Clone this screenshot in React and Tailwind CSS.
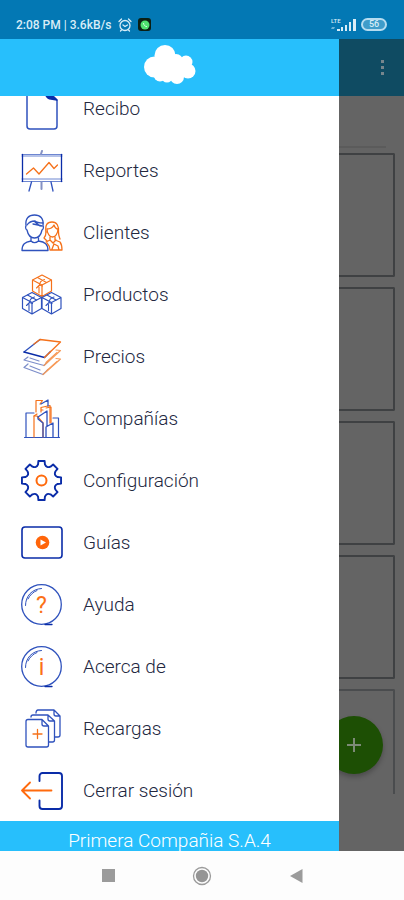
// Side menu of the invoicing app, opened over the dimmed home screen

const BLUE = '#2f52bd'
const NAVY = '#0a2ca8'
const ORANGE = '#f5711a'

function Icon({ children }) {
  return (
    <svg
      viewBox="0 0 42 42"
      className="w-[42px] h-[42px] shrink-0"
      fill="none"
      stroke={BLUE}
      strokeWidth="1.3"
      strokeLinecap="round"
      strokeLinejoin="round"
      aria-hidden="true"
    >
      {children}
    </svg>
  )
}

function ReceiptIcon() {
  return (
    <Icon>
      <path d="M25 1H9a3 3 0 0 0-3 3v34a3 3 0 0 0 3 3h24a3 3 0 0 0 3-3V12z" strokeWidth="1.5" />
      <path d="M24 5c1 4 3 6 6 6l6 1-6-5z" fill={NAVY} stroke={NAVY} />
    </Icon>
  )
}

function ReportIcon() {
  return (
    <Icon>
      <path d="M1 4.5h40M1 6h40M1 29h40M1 31.5h40" strokeWidth="1" opacity="0.7" />
      <path d="M1.5 4.5v27M40.5 4.5v27" stroke={NAVY} />
      <path d="M10.5 32 8 41M30 32l2 9" />
      <path d="M20.5 32v7M20 4l1-3" stroke="#8592c4" strokeWidth="2" />
      <path d="m5.500 24 7-6 5.500 6L28 12.500l5 6 3.500-3.500" stroke={ORANGE} />
    </Icon>
  )
}

function ClientsIcon() {
  return (
    <Icon>
      <path d="M5 14C4 6 8 3 13.500 3S23 6 22 14c1 1 0 4-1 4-1 5-4 8-7.500 8S7 23 6 18c-1 0-2-3-1-4z" />
      <path d="M6 13c2-3 5-4 8-4 2 2 6 2 8 2M12 12l5 1 4 1M14 10l5 4" />
      <path d="M10 26v3c-6 1-9 3-9 9.500h26C27 32 24 30 17.500 29v-3M10 29c2 2 5 2 7.500 0" />
      <g stroke={ORANGE}>
        <path d="M25 20c-1-7 1-10 6-10s7 4 6.500 10c0 4 1 5 1.500 7" />
        <path d="M26 17c4 0 6-2 7-4 1 3 2 4 4 4 0 5-3 8-5.500 8S26 22 26 17z" />
        <path d="M25 20c0 4-1 5-2 6l3 3M29 25v3l-4 2M34 25v3l5 2c1.500 2 2 4 2 8h-12c0-3-1-5-3-7M29 28l3 3 3-3M31 37l2-5 4 2 1 4" />
      </g>
    </Icon>
  )
}

function Cube({ x, y, color }) {
  return (
    <g transform={`translate(${x} ${y})`} stroke={color} strokeWidth="1.2">
      <path d="M9.500 0 19 5v11l-9.500 5.500L0 16V5zM0 5l9.500 5L19 5M9.500 10v11.500" />
      <path d="m5 2.500 9 5M7 10.500c0-3 1-5 5-6M4 13l3-3 3 1M6.500 12v6" strokeWidth="1.100" />
    </g>
  )
}

function ProductsIcon() {
  return (
    <Icon>
      <Cube x={11.5} y={1} color={ORANGE} />
      <Cube x={1.5} y={18.5} color={BLUE} />
      <Cube x={21} y={18.5} color={BLUE} />
    </Icon>
  )
}

function PricesIcon() {
  return (
    <Icon>
      <path d="m3 16 16-12.500" />
      <path d="m3 16 20.500 5.500 6-6" stroke={NAVY} />
      <path d="m13 8 6-4.500L39.500 6 23.500 21.500" stroke={ORANGE} />
      <g stroke="#7c8dc9" strokeWidth="1.2">
        <path d="m7 21-4 3 20 5.500 5-5M7 28l-4 3.500L22 38.500l5-5" />
        <path d="m9 22 9 3M9 30l10 4" />
      </g>
      <g stroke="#f79a58" strokeWidth="1.2">
        <path d="m35 14 4.500.500L23 29.500M35 22.500l4.500.500L22 38.500" />
        <path d="m36 16.500-11 10M36 25.500l-10 9" />
      </g>
    </Icon>
  )
}

function CompaniesIcon() {
  return (
    <Icon>
      <path d="M3.500 39.500h35M5 39V15h8M37.500 39V20H32" strokeWidth="1.200" />
      <g stroke={ORANGE} strokeWidth="1.200">
        <path d="M15 14V2.500h6.500L19 6M13 39V18l3-2M20 14V9.500l9-2V25M20 12h2" />
        <path d="M13 18h3l6 7v14M25 10l5-1v16" />
      </g>
      <path d="m20 6 7-4v6M17 19l9-6v15M17 19v2l5 4v14M25 39V29l7-4v14" />
    </Icon>
  )
}

const GEAR_ANGLES = [0, 45, 90, 135, 180, 225, 270, 315]

function gearPath(cx, cy) {
  const at = (deg, r) => {
    const a = ((deg - 90) * Math.PI) / 180
    return `${(cx + r * Math.cos(a)).toFixed(2)} ${(cy + r * Math.sin(a)).toFixed(2)}`
  }
  // tooth flank, tip, flank, then a shallow valley to the next tooth
  const teeth = GEAR_ANGLES.map(
    a => `${at(a - 12, 16.5)}L${at(a - 9, 19.8)}L${at(a + 9, 19.8)}L${at(a + 12, 16.5)}Q${at(a + 22.5, 13.2)} `
  )
  return `M${teeth.join('')}${at(-12, 16.5)}Z`
}

function SettingsIcon() {
  return (
    <Icon>
      <path d={gearPath(20.5, 20.5)} stroke={NAVY} strokeWidth="1.900" />
      <circle cx="20.500" cy="20.500" r="5" stroke="#ff6a0d" strokeWidth="2" />
    </Icon>
  )
}

function GuidesIcon() {
  return (
    <Icon>
      <rect x="1" y="5" width="40" height="31" rx="3" stroke={NAVY} strokeWidth="1.600" />
      <circle cx="21.500" cy="20.500" r="6.800" fill="#ff650a" stroke="none" />
      <path d="m19.500 17.500 5.500 3-5.500 3z" fill="#fff" stroke="none" />
    </Icon>
  )
}

function BubbleIcon({ glyph }) {
  return (
    <Icon>
      <circle cx="20.500" cy="20.500" r="19.800" />
      <path d="M4.500 21.500C4.500 12 11 5 20.500 4.500M7 15c2-4 5-7 9-8.500" strokeWidth="1" />
      <path d="M24 40.500h7" stroke={NAVY} />
      <text
        x="20.500"
        y="28.500"
        textAnchor="middle"
        fill="#fb7017"
        stroke="none"
        className="text-[23px] font-normal"
      >
        {glyph}
      </text>
    </Icon>
  )
}

function RechargesIcon() {
  return (
    <Icon>
      <path d="M15 5c0-2 1-3 2-3h16l6 6v19c0 1-1 2-2 2h-3M33 2v4c0 1 1 2 2 2h4" />
      <path d="M10 9c0-1 1-2 2-2h15l6.500 6v19c0 1-1 2-2 2H28M27 7v4c0 1 1 2 2 2h4.500" />
      <path d="M7 11.500h14l6.500 6.500v19c0 1-1 2-2 2H7c-1 0-2-1-2-2V13.500c0-1 1-2 2-2zM21 11.500V16c0 1 1 2 2 2h4.500" />
      <path d="M16.500 21.500v9M12 26h9" stroke={ORANGE} />
    </Icon>
  )
}

function LogoutIcon() {
  return (
    <Icon>
      <path
        d="M18.500 11V6a3 3 0 0 1 3-3H38a3 3 0 0 1 3 3v30a3 3 0 0 1-3 3H21.500a3 3 0 0 1-3-3v-5.500"
        stroke={NAVY}
        strokeWidth="1.900"
      />
      <path d="M1 20.500h29.500M9 12.500l-8 8 8 8" stroke="#ff6a0d" strokeWidth="1.800" />
    </Icon>
  )
}

const MENU = [
  { label: 'Recibo', icon: <ReceiptIcon /> },
  { label: 'Reportes', icon: <ReportIcon /> },
  { label: 'Clientes', icon: <ClientsIcon /> },
  { label: 'Productos', icon: <ProductsIcon /> },
  { label: 'Precios', icon: <PricesIcon /> },
  { label: 'Compañías', icon: <CompaniesIcon /> },
  { label: 'Configuración', icon: <SettingsIcon /> },
  { label: 'Guías', icon: <GuidesIcon /> },
  { label: 'Ayuda', icon: <BubbleIcon glyph="?" /> },
  { label: 'Acerca de', icon: <BubbleIcon glyph="i" /> },
  { label: 'Recargas', icon: <RechargesIcon /> },
  { label: 'Cerrar sesión', icon: <LogoutIcon /> },
]

function StatusBar() {
  return (
    <header className="h-[39px] shrink-0 bg-[#0378b4] flex items-center pl-4 pr-[17px] pt-[10px] text-[#d9edf7]">
      <span className="text-[12px] leading-4 font-medium">2:08 PM | 3.6kB/s</span>
      <svg viewBox="0 0 14 14" className="w-[14px] h-[14px] ml-[7px]" fill="none" stroke="currentColor" strokeWidth="1.300" strokeLinecap="round">
        <circle cx="7" cy="7.500" r="5" />
        <path d="M1 3.500 3.500 1M13 3.500 10.500 1M3.500 12 2.500 13M10.500 12l1 1M5 7l2 1.500L9.500 7" />
      </svg>
      <span className="w-[13px] h-[13px] ml-[6px] rounded-[3px] bg-[#0b1f14] flex items-center justify-center">
        <svg viewBox="0 0 10 10" className="w-[10px] h-[10px]">
          <circle cx="5" cy="5" r="4.500" fill="#4fe070" />
          <path d="M3.500 3c0 2 1.500 3.500 3.500 3.700" fill="none" stroke="#d6ffdf" strokeWidth="1" />
        </svg>
      </span>
      <svg viewBox="0 0 26 14" className="w-[26px] h-[14px] ml-auto" fill="currentColor">
        <text x="0" y="5" className="text-[6px] font-medium">LTE</text>
        <path d="M1 9h3l-1 2H0z" opacity="0.500" />
        <path d="M6 11h3v2H6zM10 9h2v4h-2zM14 7h2v6h-2zM18 4h2v9h-2zM22 1h3v12h-3z" />
      </svg>
      <span className="w-[26px] h-[13px] ml-[4px] rounded-full border-2 border-[#b5dcf0] bg-[#3f9cca] text-[9px] leading-[9px] text-center font-medium">
        56
      </span>
    </header>
  )
}

function Cloud() {
  return (
    <svg viewBox="0 0 53 41" className="w-[53px] h-[41px]" fill="#fff" role="img" aria-label="Nube">
      <circle cx="22" cy="11.500" r="10.500" />
      <circle cx="11.500" cy="23" r="10.500" />
      <circle cx="43" cy="18" r="6.500" />
      <circle cx="45" cy="27" r="7.500" />
      <circle cx="34" cy="33" r="7" />
      <circle cx="17" cy="31" r="6.500" />
      <circle cx="24" cy="33" r="5.500" />
      <circle cx="33" cy="17" r="7" />
      <ellipse cx="28" cy="24" rx="18" ry="11" />
    </svg>
  )
}

function Drawer() {
  return (
    <aside className="flex-1 min-w-0 flex flex-col bg-white">
      <div className="h-[57px] shrink-0 bg-[#27bffc] flex items-center justify-center pb-[6px]">
        <Cloud />
      </div>
      {/* list is scrolled a little, so the first row is cut by the header */}
      <nav className="flex-1 min-h-0 overflow-hidden">
        <div className="-mt-[18px] flex flex-col">
          {MENU.map(item => (
            <a
              key={item.label}
              href="#"
              className="h-[62px] shrink-0 pl-[21px] flex items-center gap-5 text-[19px] leading-6 font-light text-[#23283f]"
            >
              {item.icon}
              <span>{item.label}</span>
            </a>
          ))}
        </div>
      </nav>
      <div className="h-[30px] shrink-0 overflow-hidden bg-[#27bffc] pt-[8px] text-center text-[19px] leading-6 font-light text-white">
        Primera Compañia S.A.4
      </div>
    </aside>
  )
}

// The strip of the home screen left visible beside the drawer
function DimmedPage() {
  return (
    <main className="relative w-[65px] shrink-0 overflow-hidden bg-[#646464] flex flex-col">
      <div className="h-[57px] shrink-0 bg-[#0f4b62] flex items-center justify-end pr-[16px]">
        <button type="button" aria-label="Más opciones" className="w-3 h-6 flex flex-col items-center justify-center gap-[3px]">
          <span className="w-[3px] h-[3px] bg-[#77868d]" />
          <span className="w-[3px] h-[3px] bg-[#77868d]" />
          <span className="w-[3px] h-[3px] bg-[#77868d]" />
        </button>
      </div>
      <div className="h-[52px] shrink-0 mr-[18px] border-b-2 border-[#5b5b5b]" />
      <div className="mt-[5px] mr-[9px] flex flex-col gap-[10px]">
        <div className="h-[124px] border-y-2 border-r-2 border-[#3f4143] rounded-r-[2px]" />
        <div className="h-[124px] border-y-2 border-r-2 border-[#3f4143] rounded-r-[2px]" />
        <div className="h-[124px] border-y-2 border-r-2 border-[#3f4143] rounded-r-[2px]" />
        <div className="h-[124px] border-y-2 border-r-2 border-[#3f4143] rounded-r-[2px]" />
        <div className="h-[105px] border-t-2 border-r-2 border-[#4a4c4e] rounded-tr-[2px]" />
      </div>
      <button
        type="button"
        aria-label="Agregar"
        className="absolute right-[21px] bottom-[77px] w-[58px] h-[58px] rounded-full bg-[#1d4f04] shadow-[0_3px_5px_rgba(0,0,0,0.25)] flex items-center justify-center"
      >
        <svg viewBox="0 0 16 16" className="w-4 h-4" stroke="#7d8a77" strokeWidth="2">
          <path d="M8 1v14M1 8h14" />
        </svg>
      </button>
    </main>
  )
}

function SystemNav() {
  return (
    <footer className="h-[49px] shrink-0 bg-[#fdfdfd] flex items-center justify-center">
      <button type="button" aria-label="Recientes" className="w-[94px] h-full flex items-center justify-center">
        <span className="w-[13px] h-[13px] bg-[#9b9b9b]" />
      </button>
      <button type="button" aria-label="Inicio" className="w-[94px] h-full flex items-center justify-center">
        <svg viewBox="0 0 20 20" className="w-5 h-5">
          <circle cx="10" cy="10" r="8.500" fill="none" stroke="#9b9b9b" strokeWidth="1.300" />
          <circle cx="10" cy="10" r="6.200" fill="#959595" />
        </svg>
      </button>
      <button type="button" aria-label="Atrás" className="w-[94px] h-full flex items-center justify-center">
        <svg viewBox="0 0 13 14" className="w-[13px] h-[14px]" fill="#9b9b9b">
          <path d="M12.500 0v14L0 7z" />
        </svg>
      </button>
    </footer>
  )
}

export default function App() {
  return (
    <div className="h-screen flex flex-col overflow-hidden bg-white font-[Roboto,sans-serif]">
      <StatusBar />
      <div className="flex-1 min-h-0 flex">
        <Drawer />
        <DimmedPage />
      </div>
      <SystemNav />
    </div>
  )
}
